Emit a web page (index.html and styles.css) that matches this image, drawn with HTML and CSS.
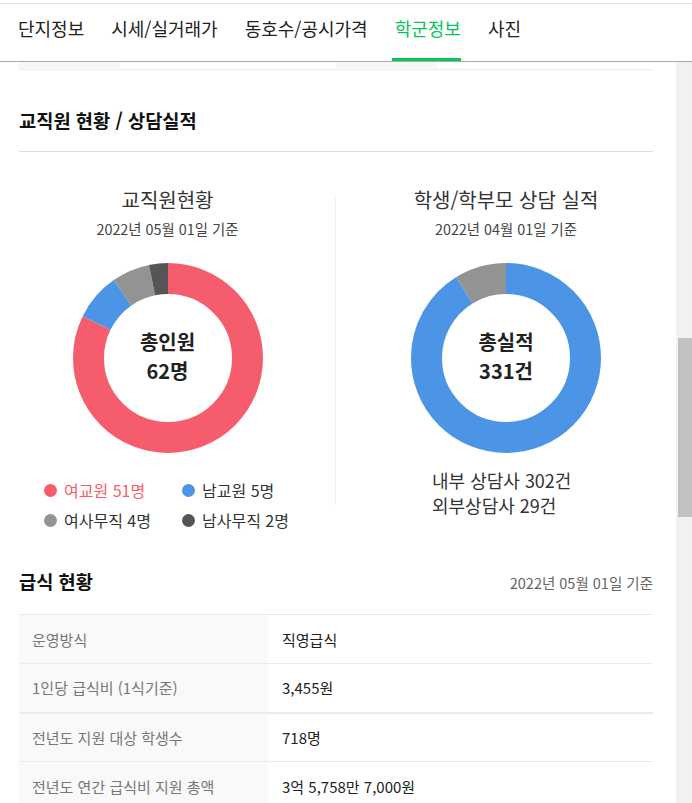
FILE: index.html
```html
<!DOCTYPE html>
<html lang="ko">
<head>
  <meta charset="UTF-8">
  <title>학군정보</title>
  <link rel="stylesheet" href="styles.css">
</head>
<body>

  <header class="tabs">
    <a class="tab" href="#">단지정보</a>
    <a class="tab" href="#">시세/실거래가</a>
    <a class="tab" href="#">동호수/공시가격</a>
    <a class="tab active" href="#">학군정보</a>
    <a class="tab" href="#">사진</a>
  </header>

  <div class="page">
    <main class="content">
      <div class="prev-row">
        <span class="cell head"></span>
        <span class="cell"></span>
        <span class="cell head"></span>
        <span class="cell"></span>
      </div>

      <section class="section">
        <h2 class="section-title underline">교직원 현황 / 상담실적</h2>
      </section>

      <div class="charts">
        <div class="chart chart-staff">
          <h3 class="chart-title">교직원현황</h3>
          <p class="chart-date">2022년 05월 01일 기준</p>
          <div class="donut">
            <svg width="190" height="190" viewBox="0 0 190 190">
              <g transform="rotate(-90 95 95)" fill="none" stroke-width="31">
                <circle cx="95" cy="95" r="79.5" pathLength="100" stroke="#f65d6c" stroke-dasharray="82.26 100"/>
                <circle cx="95" cy="95" r="79.5" pathLength="100" stroke="#4c95e6" stroke-dasharray="8.06 100" stroke-dashoffset="-82.26"/>
                <circle cx="95" cy="95" r="79.5" pathLength="100" stroke="#939393" stroke-dasharray="6.45 100" stroke-dashoffset="-90.32"/>
                <circle cx="95" cy="95" r="79.5" pathLength="100" stroke="#555555" stroke-dasharray="3.23 100" stroke-dashoffset="-96.77"/>
              </g>
            </svg>
            <div class="donut-label">총인원<br>62명</div>
          </div>
          <ul class="legend">
            <li class="legend-item red"><span class="dot"></span>여교원 51명</li>
            <li class="legend-item blue"><span class="dot"></span>남교원 5명</li>
            <li class="legend-item gray"><span class="dot"></span>여사무직 4명</li>
            <li class="legend-item dark"><span class="dot"></span>남사무직 2명</li>
          </ul>
        </div>

        <div class="divider"></div>

        <div class="chart chart-counsel">
          <h3 class="chart-title">학생/학부모 상담 실적</h3>
          <p class="chart-date">2022년 04월 01일 기준</p>
          <div class="donut">
            <svg width="190" height="190" viewBox="0 0 190 190">
              <g transform="rotate(-90 95 95)" fill="none" stroke-width="31">
                <circle cx="95" cy="95" r="79.5" pathLength="100" stroke="#4c95e6" stroke-dasharray="91.24 100"/>
                <circle cx="95" cy="95" r="79.5" pathLength="100" stroke="#939393" stroke-dasharray="8.76 100" stroke-dashoffset="-91.24"/>
              </g>
            </svg>
            <div class="donut-label">총실적<br>331건</div>
          </div>
          <div class="counsel-legend">
            <p>내부 상담사 302건</p>
            <p>외부상담사 29건</p>
          </div>
        </div>
      </div>

      <section class="section meal">
        <div class="meal-head">
          <h2 class="section-title">급식 현황</h2>
          <span class="base-date">2022년 05월 01일 기준</span>
        </div>
        <table class="info-table">
          <tr>
            <th>운영방식</th>
            <td>직영급식</td>
          </tr>
          <tr class="split">
            <th>1인당 급식비 (1식기준)</th>
            <td>3,455원</td>
          </tr>
          <tr>
            <th>전년도 지원 대상 학생수</th>
            <td>718명</td>
          </tr>
          <tr>
            <th>전년도 연간 급식비 지원 총액</th>
            <td>3억 5,758만 7,000원</td>
          </tr>
        </table>
      </section>
    </main>

    <div class="scrollbar">
      <div class="thumb"></div>
    </div>
  </div>

</body>
</html>
```

FILE: styles.css
```css
* {
  margin: 0;
  padding: 0;
  box-sizing: border-box;
}
html, body {
  height: 803px;
  overflow: hidden;
}
body {
  font-family: "Noto Sans CJK KR", "Noto Sans", sans-serif;
  background-color: #fff;
  color: #222;
}

/* tabs */
.tabs {
  margin-top: 3px;
  height: 59px;
  border-top: 1px solid #e3e3e3;
  border-bottom: 1px solid #aaa;
  padding-left: 15px;
  display: flex;
  gap: 24px;
}
.tab {
  padding: 11px 0 0 3px;
  height: 57px;
  font-size: 18px;
  line-height: 26px;
  color: #222;
  text-decoration: none;
  border-bottom: 3px solid transparent;
}
.tab.active {
  color: #03c75a;
  border-bottom-color: #03c75a;
}

.page {
  display: flex;
  height: 741px;
}
.content {
  flex: 1;
  overflow: hidden;
}

/* bottom of the table above */
.prev-row {
  margin: 0 23px 0 19px;
  display: grid;
  grid-template-columns: 101px 216px 101px 216px;
  height: 8px;
  border-bottom: 1px solid #eee;
}
.prev-row .head {
  background-color: #f8f8f8;
}

.section {
  padding: 0 23px 0 19px;
}
.section-title {
  font-size: 18.7px;
  line-height: 26px;
  font-weight: bold;
  color: #111;
}
.section-title.underline {
  margin-top: 37px;
  padding-bottom: 18px;
  border-bottom: 1px solid #ddd;
}

/* charts */
.charts {
  display: flex;
}
.chart {
  padding-top: 34px;
  text-align: center;
}
.chart-staff {
  width: 335px;
}
.chart-counsel {
  flex: 1;
}
.divider {
  width: 1px;
  height: 307px;
  margin-top: 46px;
  background-color: #eee;
}
.chart-title {
  font-size: 20px;
  line-height: 28px;
  font-weight: normal;
  color: #333;
}
.chart-date {
  margin-top: 5px;
  font-size: 14.4px;
  line-height: 20px;
  color: #444;
}
.donut {
  width: 190px;
  height: 190px;
  margin: 24px auto 0;
  display: grid;
  place-items: center;
}
.donut svg,
.donut-label {
  grid-area: 1 / 1;
}
.donut-label {
  font-size: 20px;
  line-height: 29px;
  font-weight: bold;
  color: #222;
  margin-top: -5px;
}

.legend {
  list-style: none;
  margin: 27px 0 0 44px;
  display: grid;
  grid-template-columns: 138px 138px;
  row-gap: 10px;
  text-align: left;
}
.legend-item {
  display: flex;
  align-items: center;
  font-size: 16px;
  line-height: 20px;
  color: #333;
}
.dot {
  width: 13px;
  height: 13px;
  border-radius: 50%;
  margin-right: 7px;
}
.legend-item.red { color: #f65d6c; }
.legend-item.red .dot { background-color: #f65d6c; }
.legend-item.blue .dot { background-color: #4c95e6; }
.legend-item.gray .dot { background-color: #939393; }
.legend-item.dark .dot { background-color: #555; }

.counsel-legend {
  margin: 15px 0 0 96px;
  text-align: left;
  font-size: 18px;
  line-height: 25px;
  color: #333;
}

/* meal */
.meal {
  padding-top: 38px;
}
.meal-head {
  display: flex;
  justify-content: space-between;
  align-items: baseline;
}
.base-date {
  font-size: 14.5px;
  color: #666;
}
.info-table {
  width: 100%;
  margin-top: 20px;
  border-collapse: collapse;
  border-top: 1px solid #ebebeb;
}
.info-table th,
.info-table td {
  height: 49px;
  border-bottom: 1px solid #ebebeb;
  font-size: 15px;
  text-align: left;
  font-weight: normal;
}
.info-table th {
  width: 249px;
  padding-left: 13px;
  background-color: #f9f9f9;
  color: #777;
}
.info-table td {
  padding-left: 14px;
  color: #222;
}
.info-table tr.split th,
.info-table tr.split td {
  border-bottom: 2px solid #ebebeb;
}

/* scrollbar */
.scrollbar {
  width: 16px;
  background-color: #f1f1f1;
}
.thumb {
  margin: 276px 0 0 2px;
  height: 179px;
  background-color: #c1c1c1;
}
```
